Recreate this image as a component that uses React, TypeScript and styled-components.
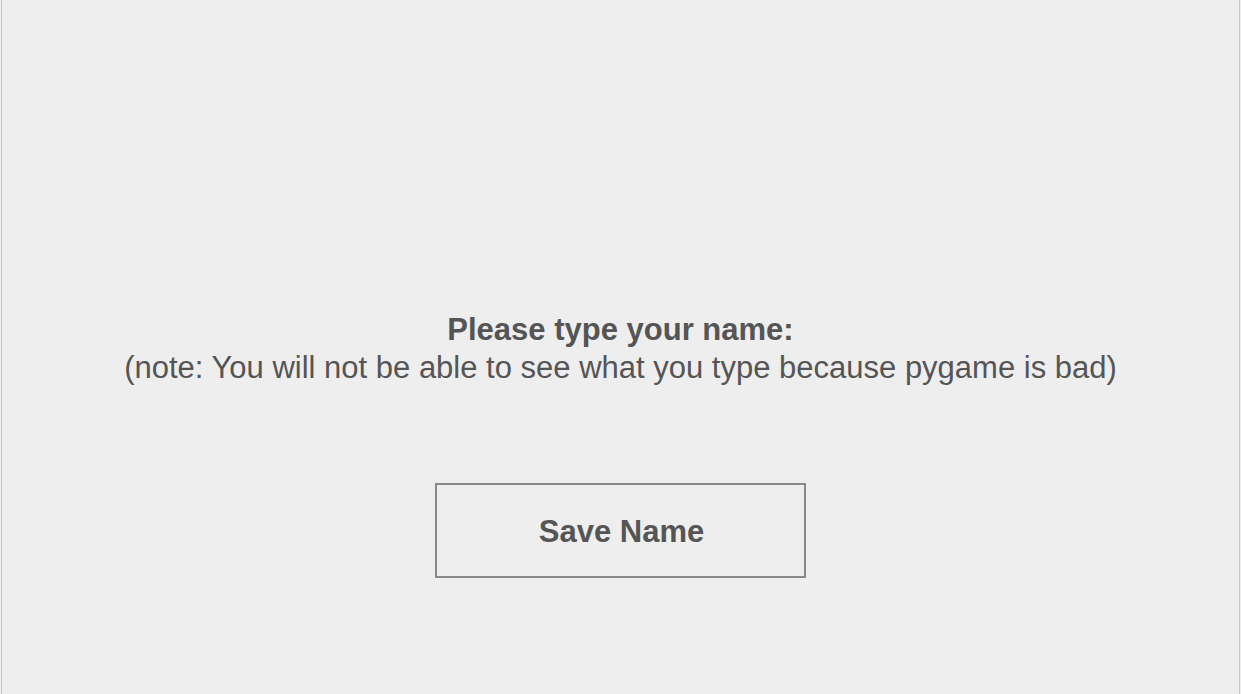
import React from "react";
import styled, { createGlobalStyle } from "styled-components";

const Global = createGlobalStyle`
  html, body { margin: 0; padding: 0; background: #eeeeee; }
  body { font-family: "Liberation Sans", Arial, sans-serif; }
`;

const Frame = styled.main`
  box-sizing: border-box;
  height: 694px;
  margin: 0 1px;
  border-left: 1px solid #c8c8c8;
  border-right: 1px solid #c8c8c8;
  background: #eeeeee;
  display: flex;
  flex-direction: column;
  align-items: center;
  padding-top: 311px;
  color: #555555;
`;

const Prompt = styled.div`
  display: flex;
  flex-direction: column;
  align-items: center;
  font-size: 31px;
  line-height: 38px;
`;

const Title = styled.div`
  font-weight: bold;
`;

const Note = styled.div`
  font-weight: normal;
`;

const SaveButton = styled.button`
  box-sizing: border-box;
  margin-top: 96px;
  width: 371px;
  height: 95px;
  background: transparent;
  border: 2px solid #888888;
  color: #555555;
  font-family: "Liberation Sans", Arial, sans-serif;
  font-weight: bold;
  font-size: 31px;
  padding: 2px 0 0 2px;
  cursor: pointer;
`;

export default function App() {
  return (
    <>
      <Global />
      <Frame>
        <Prompt>
          <Title>Please type your name:</Title>
          <Note>(note: You will not be able to see what you type because pygame is bad)</Note>
        </Prompt>
        <SaveButton>Save Name</SaveButton>
      </Frame>
    </>
  );
}
